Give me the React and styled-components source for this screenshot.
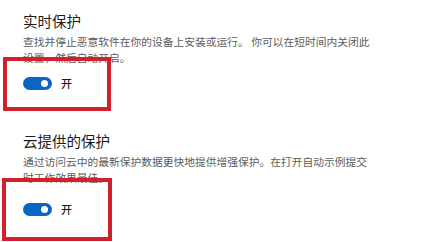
import React from 'react'
import styled, { createGlobalStyle } from 'styled-components'

const GlobalStyle = createGlobalStyle`
  html, body {
    margin: 0;
    padding: 0;
    background: #ffffff;
  }
  body {
    font-family: "Noto Sans CJK SC", "Noto Sans", sans-serif;
  }
`

const Page = styled.div`
  width: 423px;
  height: 242px;
  box-sizing: border-box;
  padding: 11px 0 0 23px;
  display: flex;
  flex-direction: column;
  overflow: hidden;
`

const Section = styled.section`
  display: flex;
  flex-direction: column;
  margin-bottom: ${props => props.$after || 0}px;
`

const Title = styled.h2`
  margin: 0;
  font-size: 14.5px;
  line-height: 20px;
  font-weight: 400;
  color: #1b1b1b;
`

const Description = styled.p`
  margin: 3px 0 0;
  font-size: 10.75px;
  line-height: 16px;
  color: #5c5c5c;
  white-space: nowrap;
`

const ToggleRow = styled.div`
  position: relative;
  display: flex;
  align-items: center;
  gap: 9px;
  height: 20px;
  margin-top: ${props => props.$top}px;
`

const Highlight = styled.div`
  position: absolute;
  left: ${props => props.$left}px;
  top: ${props => props.$top}px;
  width: ${props => props.$width}px;
  height: ${props => props.$height}px;
  box-sizing: border-box;
  border: 4px solid #d2202c;
  pointer-events: none;
`

const Switch = styled.span`
  position: relative;
  display: inline-block;
  width: 29px;
  height: 13px;
  border-radius: 7px;
  background: #0a66c2;
  &::after {
    content: '';
    position: absolute;
    right: 4px;
    top: 3px;
    width: 7px;
    height: 7px;
    border-radius: 50%;
    background: #ffffff;
  }
`

const SwitchLabel = styled.span`
  font-size: 11px;
  line-height: 14px;
  color: #1b1b1b;
  font-weight: 500;
`

const sections = [
  {
    title: '实时保护',
    lines: ['查找并停止恶意软件在你的设备上安装或运行。 你可以在短时间内关闭此', '设置，然后自动开启。'],
    rowTop: 7,
    after: 38,
    box: { left: -20, top: -16, width: 108, height: 54 }
  },
  {
    title: '云提供的保护',
    lines: ['通过访问云中的最新保护数据更快地提供增强保护。在打开自动示例提交', '时工作效果最佳。'],
    rowTop: 13,
    after: 0,
    box: { left: -21, top: -21, width: 110, height: 63 }
  }
]

export default function App () {
  return (
    <>
      <GlobalStyle />
      <Page>
        {sections.map(s => (
          <Section key={s.title} $after={s.after}>
            <Title>{s.title}</Title>
            <Description>
              {s.lines[0]}<br />{s.lines[1]}
            </Description>
            <ToggleRow $top={s.rowTop}>
              <Switch />
              <SwitchLabel>开</SwitchLabel>
              <Highlight
                $left={s.box.left}
                $top={s.box.top}
                $width={s.box.width}
                $height={s.box.height}
              />
            </ToggleRow>
          </Section>
        ))}
      </Page>
    </>
  )
}
